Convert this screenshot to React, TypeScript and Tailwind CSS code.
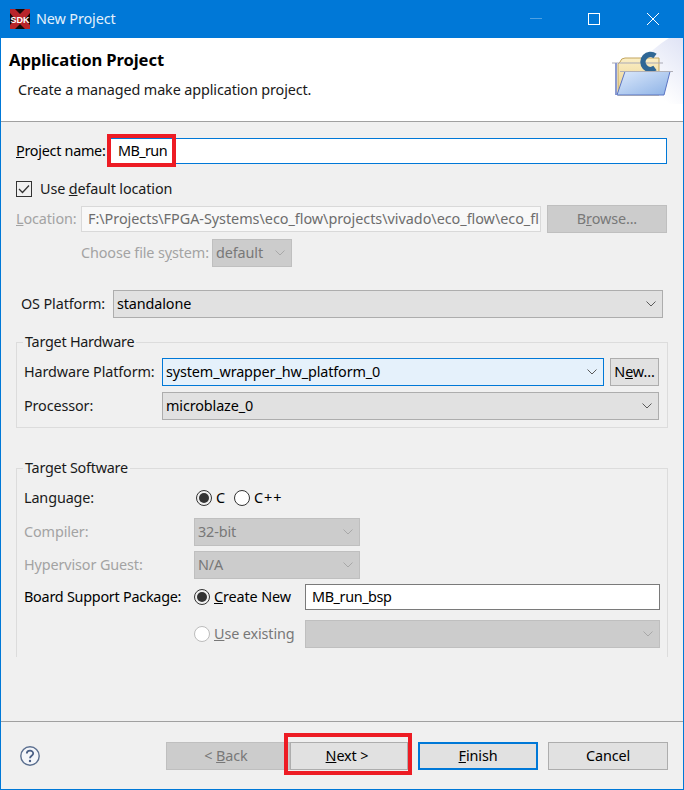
import React from "react";

const Chevron = ({ dim = false }: { dim?: boolean }) => (
  <svg width="10" height="6" viewBox="0 0 10 6" className="shrink-0" fill="none">
    <path d="M0.5 0.5 L5 5 L9.5 0.5" stroke={dim ? "#a8a8a8" : "#5a5a5a"} strokeWidth="1" />
  </svg>
);

const Select = ({
  text,
  className,
  variant = "normal",
}: {
  text?: string;
  className: string;
  variant?: "normal" | "disabled" | "focus";
}) => {
  const look =
    variant === "focus"
      ? "bg-[#e5f1fb] border-[#0078d7] text-black"
      : variant === "disabled"
      ? "bg-[#cccccc] border-[#bfbfbf] text-[#787878]"
      : "bg-[#e1e1e1] border-[#adadad] text-black";
  return (
    <div className={`h-[28px] border flex items-center justify-between pl-[3px] pr-[6px] ${look} ${className}`}>
      <span>{text}</span>
      <Chevron dim={variant === "disabled"} />
    </div>
  );
};

const Radio = ({ on = false, dim = false }: { on?: boolean; dim?: boolean }) => (
  <span
    className={`w-[16px] h-[16px] rounded-full border flex items-center justify-center shrink-0 ${
      dim ? "border-[#bcbcbc] bg-white" : on ? "border-[#333333]" : "border-[#333333] bg-white"
    }`}
  >
    {on && <span className="w-[10px] h-[10px] rounded-full bg-[#333333]" />}
  </span>
);

const Btn = ({ children, className }: { children: React.ReactNode; className: string }) => (
  <div className={`h-[28px] flex items-center justify-center border ${className}`}>{children}</div>
);

const Group = ({ title, className, children }: { title: string; className: string; children: React.ReactNode }) => (
  <div className={`relative mx-[15px] border-[#dcdcdc] ${className}`}>
    <span className="absolute left-[6px] top-[-11px] bg-[#f0f0f0] px-[2px] leading-[20px] text-[#1a1a1a] tracking-[-0.25px]">{title}</span>
    {children}
  </div>
);

export default function App() {
  return (
    <div
      className="relative w-[684px] h-[790px] flex flex-col bg-[#f0f0f0] border-x border-b border-[#0078d7] overflow-hidden text-[14.4px] leading-[20px] text-black"
      style={{ fontFamily: '"Noto Sans", "Open Sans", sans-serif', letterSpacing: "-0.12px" }}
    >
      {/* Title bar */}
      <div className="h-[38px] -mx-px bg-[#0078d7] flex items-center shrink-0 text-[#e3f0fb]">
        <svg width="20" height="20" viewBox="0 0 20 20" className="ml-[10px] mr-[6px]">
          <rect width="20" height="20" fill="#140808" />
          <path d="M0 0h5l5 5 5-5h5v4l-5 6 5 6v4h-5l-5-5-5 5H0v-4l5-6-5-6z" fill="#b8242a" />
          <text x="10" y="13.5" textAnchor="middle" fontSize="9" fontWeight="700" fill="#fff" style={{ fontFamily: '"Liberation Sans", sans-serif', letterSpacing: 0 }}>
            SDK
          </text>
        </svg>
        <span>New Project</span>
        <div className="flex-1" />
        <div className="w-[12px] h-px bg-[#4ea1e3] mr-[46px] mb-[2px]" />
        <div className="w-[12px] h-[12px] border border-white mr-[47px] mb-[1px]" />
        <svg width="12" height="12" viewBox="0 0 12 12" className="mr-[25px] mb-[1px]">
          <path d="M0 0 L12 12 M12 0 L0 12" stroke="#fff" strokeWidth="1" />
        </svg>
      </div>

      {/* Header */}
      <div className="relative h-[84px] shrink-0 bg-white border-b border-[#a0a0a0] pl-[8px] pt-[11px]">
        <div className="font-bold text-[16.6px] leading-[22px] tracking-[-0.1px]">Application Project</div>
        <div className="pl-[9px] pt-[9px] text-[#1a1a1a] tracking-[-0.12px]">Create a managed make application project.</div>
        <svg width="74" height="66" viewBox="0 0 74 66" className="absolute right-0 top-0">
          <defs>
            <linearGradient id="bg" x1="0" y1="1" x2="1" y2="0">
              <stop offset="0.4" stopColor="#ffffff" />
              <stop offset="1" stopColor="#dfe3f5" />
            </linearGradient>
            <linearGradient id="front" x1="0" y1="0" x2="1" y2="1">
              <stop offset="0" stopColor="#dce9fb" />
              <stop offset="1" stopColor="#8db2e6" />
            </linearGradient>
            <linearGradient id="back" x1="0" y1="0" x2="0" y2="1">
              <stop offset="0" stopColor="#fbeec4" />
              <stop offset="1" stopColor="#e8cf8e" />
            </linearGradient>
          </defs>
          <path d="M0 66 H74 V0 H60 Q28 20 0 66Z" fill="url(#bg)" />
          <path d="M9 26 V57 H50 V20 H33 L31 20 H16 Q12 20 11 24Z" fill="url(#back)" stroke="#c3a55e" />
          <path d="M3 25 H54" stroke="#a9a9b5" strokeWidth="1" />
          <path d="M7 25 V57" stroke="#8c9bd0" strokeWidth="2" />
          <path d="M46 18 A 7.5 7.5 0 1 0 46 30" fill="none" stroke="#2f6795" strokeWidth="5.5" />
          <path d="M16 33.5 H61 L55 57 H8 Z" fill="url(#front)" stroke="#5a74c4" strokeWidth="1" />
          <path d="M11 33.5 H64" stroke="#b0b0b8" strokeWidth="1" />
        </svg>
      </div>

      {/* Body */}
      <div className="flex-1 flex flex-col min-h-0">
        <div className="flex items-center mt-[16px] pl-[15px] pr-[16px]">
          <span className="w-[91px] shrink-0 whitespace-nowrap tracking-[-0.28px]">
            <u>P</u>roject name:
          </span>
          <div className="flex-1 h-[26px] bg-white border border-[#0078d7] flex items-center pl-[10px] tracking-[-0.6px]">MB_run</div>
        </div>

        <div className="flex items-center mt-[15px] pl-[15px]">
          <span className="w-[16px] h-[16px] border border-[#333333] flex items-center justify-center">
            <svg width="12" height="10" viewBox="0 0 12 10" fill="none">
              <path d="M1 5 L4.5 8.5 L11 1.5" stroke="#333" strokeWidth="1.3" />
            </svg>
          </span>
          <span className="ml-[8px] text-[#1a1a1a]">
            Use <u>d</u>efault location
          </span>
        </div>

        <div className="flex items-center mt-[6px] pl-[15px] pr-[16px] h-[28px]">
          <span className="w-[65px] shrink-0 text-[#a3a3a3]">
            <u>L</u>ocation:
          </span>
          <div className="w-[460px] h-[26px] bg-[#f8f8f8] border border-[#d9d9d9] flex items-center pl-[6px] pr-[2px] text-[#6d6d6d] overflow-hidden whitespace-nowrap tracking-[-0.03px]">
            F:\Projects\FPGA-Systems\eco_flow\projects\vivado\eco_flow\eco_fl
          </div>
          <Btn className="ml-[6px] w-[120px] bg-[#cccccc] border-[#bfbfbf] text-[#787878]">
            <span>
              B<u>r</u>owse...
            </span>
          </Btn>
        </div>

        <div className="flex items-center mt-[6px] pl-[80px]">
          <span className="w-[131px] shrink-0 text-[#a3a3a3] whitespace-nowrap">
            Choose file s<u>y</u>stem:
          </span>
          <Select text="default" variant="disabled" className="w-[80px]" />
        </div>

        <div className="flex items-center mt-[23px] pl-[20px]">
          <span className="w-[92px] shrink-0 text-[#1a1a1a]">OS Platform:</span>
          <Select text="standalone" className="w-[550px]" />
        </div>

        <Group title="Target Hardware" className="mt-[24px] h-[86px] border pt-[15px] pl-[7px] pr-[8px]">
          <div className="flex items-center">
            <span className="w-[138px] shrink-0 text-[#1a1a1a]">Hardware Platform:</span>
            <Select text="system_wrapper_hw_platform_0" variant="focus" className="w-[442px]" />
            <Btn className="ml-[6px] w-[49px] bg-[#e1e1e1] border-[#adadad]">
              <span>
                N<u>e</u>w...
              </span>
            </Btn>
          </div>
          <div className="flex items-center mt-[6px]">
            <span className="w-[138px] shrink-0 text-[#1a1a1a]">Processor:</span>
            <Select text="microblaze_0" className="w-[498px]" />
          </div>
        </Group>

        <Group title="Target Software" className="mt-[40px] h-[189px] border-t border-x pl-[7px] pr-[7px]">
          <div className="flex items-center mt-[19px] h-[20px]">
            <span className="w-[172px] shrink-0 text-[#1a1a1a]">Language:</span>
            <Radio on />
            <span className="ml-[4px] w-[18px]">C</span>
            <Radio />
            <span className="ml-[4px] tracking-[1px]">C++</span>
          </div>
          <div className="flex items-center mt-[10px]">
            <span className="w-[170px] shrink-0 text-[#a3a3a3]">Compiler:</span>
            <Select text="32-bit" variant="disabled" className="w-[166px]" />
          </div>
          <div className="flex items-center mt-[5px]">
            <span className="w-[170px] shrink-0 text-[#a3a3a3]">Hypervisor Guest:</span>
            <Select text="N/A" variant="disabled" className="w-[166px]" />
          </div>
          <div className="flex items-center mt-[5px]">
            <span className="w-[170px] shrink-0 tracking-[-0.25px] whitespace-nowrap">Board Support Package:</span>
            <Radio on />
            <span className="ml-[4px] w-[91px]">
              <u>C</u>reate New
            </span>
            <div className="w-[355px] h-[26px] bg-white border border-[#7a7a7a] flex items-center pl-[6px] tracking-[-0.4px]">MB_run_bsp</div>
          </div>
          <div className="flex items-center mt-[10px] pl-[170px]">
            <Radio dim />
            <span className="ml-[4px] w-[91px] text-[#787878]">
              <u>U</u>se existing
            </span>
            <Select variant="disabled" className="w-[355px]" />
          </div>
        </Group>

        <div className="flex-1" />

        {/* Footer */}
        <div className="h-[68px] shrink-0 border-t border-[#a0a0a0] flex items-center pl-[19px] pr-[15px] pt-[1px]">
          <svg width="20" height="20" viewBox="0 0 20 20" fill="none" className="shrink-0">
            <circle cx="10" cy="10" r="9.2" stroke="#5b6f8f" strokeWidth="1.4" fill="#f4f6fa" />
            <path d="M6.8 7.6 C6.8 3.8 13.2 3.8 13.2 7.4 C13.2 9.8 10 9.8 10 12.3" stroke="#4a5f85" strokeWidth="1.8" />
            <circle cx="10" cy="15" r="1.2" fill="#4a5f85" />
          </svg>
          <div className="flex-1" />
          <Btn className="w-[124px] bg-[#cccccc] border-[#bfbfbf] text-[#787878] pr-[4px]">
            <span>
              &lt; <u>B</u>ack
            </span>
          </Btn>
          <Btn className="w-[118px] bg-[#e1e1e1] border-[#adadad] pr-[4px]">
            <span>
              <u>N</u>ext &gt;
            </span>
          </Btn>
          <Btn className="ml-[10px] w-[120px] bg-[#e1e1e1] !border-2 border-[#0078d7]">
            <span>
              <u>F</u>inish
            </span>
          </Btn>
          <Btn className="ml-[10px] w-[120px] bg-[#e1e1e1] border-[#adadad]">Cancel</Btn>
        </div>
      </div>

      {/* Red annotations */}
      <div className="absolute left-[106px] top-[134px] w-[69px] h-[33px] border-[4.5px] border-[#ed1c24]" />
      <div className="absolute left-[283px] top-[733px] w-[128px] h-[42px] border-[4.5px] border-[#ed1c24]" />
    </div>
  );
}
